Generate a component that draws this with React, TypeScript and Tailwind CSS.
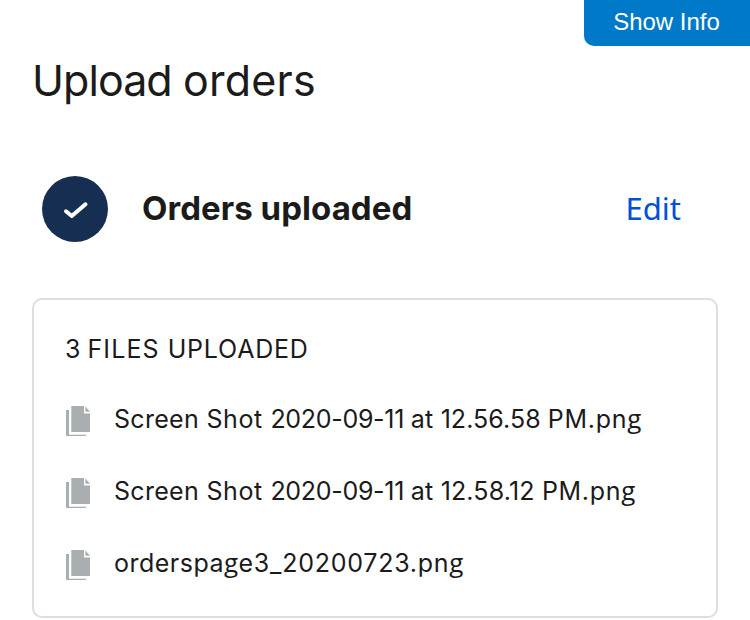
type Segment = { text: string; className: string };

const files: Segment[][] = [
  [
    { text: 'Screen ', className: 'tracking-[0.3px]' },
    { text: 'Shot ', className: 'tracking-[0.6px]' },
    { text: '2020-09-11 ', className: 'tracking-[-0.3px]' },
    { text: 'at ', className: 'tracking-[0.2px]' },
    { text: '12.56.58 ', className: 'tracking-[0.05px]' },
    { text: 'PM.pn', className: 'tracking-[0.7px]' },
  ],
  [
    { text: 'Screen ', className: 'tracking-[0.3px]' },
    { text: 'Shot ', className: 'tracking-[0.6px]' },
    { text: '2020-09-11 ', className: 'tracking-[-0.3px]' },
    { text: 'at ', className: 'tracking-[0.2px]' },
    { text: '12.58.12 ', className: 'tracking-[0.15px]' },
    { text: 'PM.pn', className: 'tracking-[0.7px]' },
  ],
  [
    { text: 'orderspa', className: 'tracking-[0.5px]' },
    { text: 'g', className: "font-['Open_Sans',sans-serif] text-[26px] tracking-[0.3px]" },
    { text: 'e3_20200723.pn', className: 'tracking-[0.75px]' },
  ],
];

function FilesIcon() {
  return (
    <svg className="relative top-[3px] h-[30px] w-6 shrink-0" viewBox="0 0 24 30" fill="#a9aeb1" aria-hidden="true">
      <path d="M5.300 0H18v7.500h6V26H5.300z" />
      <path d="M19.300 0.500L24 5.800h-4.700z" />
      <path d="M0 4h3v24.700H20V30H0z" />
    </svg>
  );
}

export default function App() {
  return (
    <main className="relative h-[620px] w-[750px] overflow-hidden bg-white font-['Inter',sans-serif] text-[#1b1b1b]">
      <button className="absolute top-0 right-0 h-[46px] w-[166px] rounded-bl-[10px] bg-[#0079c8] pr-[1px] pb-[2px] font-['Liberation_Sans',sans-serif] text-2xl text-white">
        Show Info
      </button>
      <div className="flex flex-col px-8 pt-[55px]">
        <h1 className="h-[51px] text-[43px] leading-[50px] tracking-[0.25px] whitespace-nowrap">
          <span className="tracking-[-0.95px]">Upload </span>orders
        </h1>
        <section className="mt-[70px] flex h-[66px] items-center pr-[37px] pl-[10px]">
          <div className="flex size-[66px] items-center justify-center rounded-full bg-[#162e51]">
            <svg className="size-8" viewBox="0 0 32 32" fill="none" stroke="white" strokeWidth="4" strokeLinecap="round" strokeLinejoin="round" aria-hidden="true">
              <path d="M7 18.300L12.800 23L26.500 11.300" />
            </svg>
          </div>
          <h2 className="mb-[2px] ml-[34px] text-[33px] leading-10 font-bold tracking-[0.05px] whitespace-nowrap">Orders uploaded</h2>
          <a className="mb-[2px] ml-auto font-['Noto_Sans',sans-serif] text-[31px] leading-10 text-[#0050d8]" href="#edit">Edit</a>
        </section>
        <section className="mt-14 h-80 rounded-[10px] border-2 border-[#dcdee0] px-8 pt-[33px]">
          <h3 className="text-[25px] leading-8 whitespace-nowrap">
            <span className="ml-[-1px]">3 </span>
            <span className="tracking-[1.1px]">FILES</span>
            <span className="ml-2 tracking-[0.8px]">UPLOADED</span>
          </h3>
          <ul className="mt-[37px] flex flex-col gap-10">
            {files.map((segments, row) => (
              <li key={row} className="flex h-8 items-center">
                <FilesIcon />
                <span className="ml-6 text-[25px] leading-8 whitespace-pre">
                  {segments.map((segment, index) => (
                    <span key={index} className={segment.className}>{segment.text}</span>
                  ))}
                  <span className="font-['Open_Sans',sans-serif] text-[26px]">g</span>
                </span>
              </li>
            ))}
          </ul>
        </section>
      </div>
    </main>
  );
}
